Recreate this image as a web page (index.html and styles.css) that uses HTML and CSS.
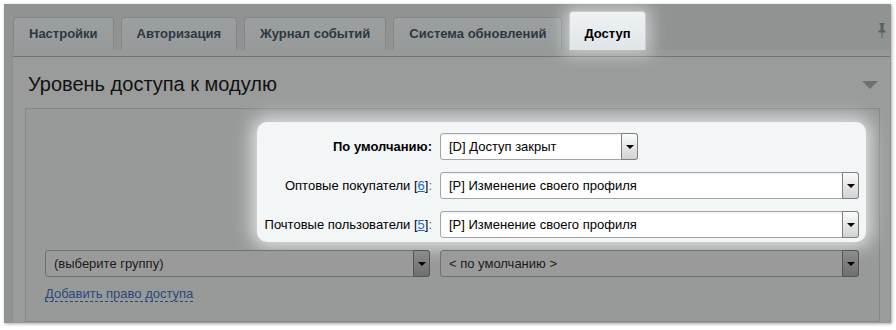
FILE: index.html
```html
<!DOCTYPE html>
<html lang="ru">
<head>
    <meta charset="UTF-8">
    <title>Уровень доступа к модулю</title>
    <link rel="stylesheet" href="styles.css">
</head>
<body>

    <div class="shot">
        <div class="tab-bar">
            <div class="tab">Настройки</div>
            <div class="tab">Авторизация</div>
            <div class="tab">Журнал событий</div>
            <div class="tab">Система обновлений</div>
            <div class="tab tab-active">Доступ</div>
            <svg class="pin" width="8" height="16" viewBox="0 0 8 16">
                <rect x="1.5" y="0" width="5" height="1.5" fill="#5c6060"/>
                <rect x="2.5" y="1" width="3" height="7" fill="#5c6060"/>
                <rect x="0.5" y="7.5" width="7" height="2" fill="#5c6060"/>
                <rect x="3.5" y="9" width="1" height="6" fill="#5c6060"/>
            </svg>
        </div>

        <div class="panel">
            <div class="strip"></div>
            <div class="panel-head">
                <h2>Уровень доступа к модулю</h2>
                <span class="toggle"></span>
            </div>

            <div class="inner">
                <!-- подсвеченная часть -->
                <div class="spot">
                    <div class="row">
                        <div class="label"><b>По умолчанию:</b></div>
                        <div class="sel sel-short">
                            <span class="sel-val">[D] Доступ закрыт</span>
                            <span class="sel-btn"><i></i></span>
                        </div>
                    </div>
                    <div class="row">
                        <div class="label">Оптовые покупатели [<a href="#">6</a>]<span class="colon">:</span></div>
                        <div class="sel">
                            <span class="sel-val">[P] Изменение своего профиля</span>
                            <span class="sel-btn"><i></i></span>
                        </div>
                    </div>
                    <div class="row">
                        <div class="label">Почтовые пользователи [<a href="#">5</a>]<span class="colon">:</span></div>
                        <div class="sel">
                            <span class="sel-val">[P] Изменение своего профиля</span>
                            <span class="sel-btn"><i></i></span>
                        </div>
                    </div>
                </div>

                <div class="row row-add">
                    <div class="sel sel-dim sel-group">
                        <span class="sel-val">(выберите группу)</span>
                        <span class="sel-btn"><i></i></span>
                    </div>
                    <div class="sel sel-dim">
                        <span class="sel-val">&lt; по умолчанию &gt;</span>
                        <span class="sel-btn"><i></i></span>
                    </div>
                </div>

                <a href="#" class="add-link">Добавить право доступа</a>
            </div>
        </div>
    </div>

</body>
</html>
```

FILE: styles.css
```css
/* Сброс */
* {
    margin: 0;
    padding: 0;
    box-sizing: border-box;
}

body {
    font-family: 'Liberation Sans', Arial, sans-serif;
    font-size: 13px;
    background-color: #fff;
    padding: 4px;
    color: #1c1c1c;
}

/* Рамка скриншота */
.shot {
    width: 887px;
    height: 319px;
    background-color: #8f9392;
    box-shadow: 1px 1px 3px rgba(0, 0, 0, 0.35);
    overflow: hidden;
}

/* Вкладки */
.tab-bar {
    display: flex;
    align-items: flex-end;
    gap: 7px;
    padding: 7px 5px 0 9px;
    height: 46px;
}

.tab {
    height: 33px;
    padding: 8px 15px;
    line-height: 16px;
    font-weight: bold;
    color: #2c3842;
    background: linear-gradient(#9c9f9f, #979a9a);
    border: 1px solid #838787;
    border-bottom: none;
    border-radius: 4px 4px 0 0;
}

.tab-active {
    position: relative;
    z-index: 1;
    height: 39px;
    padding: 14px 14px 8px;
    color: #000;
    background: linear-gradient(#eef2f3, #dfe5e8);
    border-color: #c9cfd1;
    box-shadow: 0 0 16px 5px rgba(255, 255, 255, 0.5);
}

.pin {
    margin-left: auto;
    align-self: flex-start;
    margin-top: 12px;
}

/* Панель */
.panel {
    margin-left: 8px;
    margin-right: 1px;
    height: 273px;
    background-color: #9a9b9b;
    border-left: 1px solid #8a8d8d;
}

.strip {
    height: 7px;
    background-color: #959998;
    border-bottom: 1px solid #6f7271;
}

.panel-head {
    display: flex;
    align-items: center;
    justify-content: space-between;
    padding: 15px 12px 0 15px;
}

.panel-head h2 {
    font-size: 20px;
    font-weight: normal;
    line-height: 24px;
    color: #111;
}

.toggle {
    width: 0;
    height: 0;
    border-left: 8px solid transparent;
    border-right: 8px solid transparent;
    border-top: 8px solid #6f7070;
    margin-top: 2px;
}

.inner {
    margin: 12px 10px 0 12px;
    height: 214px;
    background-color: #989999;
    border: 1px solid #848888;
    padding: 0 20px 0 19px;
}

/* Подсвеченный блок */
.spot {
    margin: 13px -7px 0 212px;
    padding: 11px 7px 4px 0;
    background-color: #f3f6f7;
    border-radius: 10px;
    box-shadow: 0 0 18px 5px rgba(243, 246, 247, 0.8);
    display: flex;
    flex-direction: column;
    gap: 12px;
}

.row {
    display: flex;
    align-items: center;
    gap: 8px;
}

.label {
    width: 175px;
    text-align: right;
    color: #000;
    white-space: nowrap;
}

.label a {
    color: #1a6bc4;
}

.colon {
    color: #5a6b80;
}

/* Выпадающие списки */
.sel {
    flex: 1;
    display: flex;
    height: 27px;
    background-color: #fff;
    border: 1px solid #a4a4a4;
    border-radius: 3px;
    box-shadow: inset 0 1px 2px rgba(0, 0, 0, 0.08);
}

.sel-short {
    flex: 0 0 198px;
}

.sel-val {
    flex: 1;
    padding-left: 8px;
    line-height: 25px;
    color: #000;
    white-space: nowrap;
    overflow: hidden;
}

.sel-btn {
    width: 17px;
    margin: -1px -1px -1px 0;
    display: flex;
    align-items: center;
    justify-content: center;
    background: linear-gradient(#fbfbfb, #d2d2d2);
    border: 1px solid #7e7e7e;
    border-radius: 0 3px 3px 0;
}

.sel-btn i {
    width: 0;
    height: 0;
    border-left: 4px solid transparent;
    border-right: 4px solid transparent;
    border-top: 4px solid #000;
}

/* Затемнённые списки */
.row-add {
    margin-top: 8px;
    gap: 10px;
}

.sel-dim {
    background-color: #9a9a9a;
    border-color: #707272;
    box-shadow: none;
}

.sel-dim .sel-val {
    color: #1a1a1a;
}

.sel-dim .sel-btn {
    background: linear-gradient(#8c8c8c, #6f6f6f);
    border-color: #555;
}

.sel-group {
    flex: 0 0 385px;
}

.add-link {
    display: inline-block;
    margin-top: 9px;
    line-height: 15px;
    color: #28497c;
    text-decoration: none;
    border-bottom: 1px dashed #28497c;
}
```
